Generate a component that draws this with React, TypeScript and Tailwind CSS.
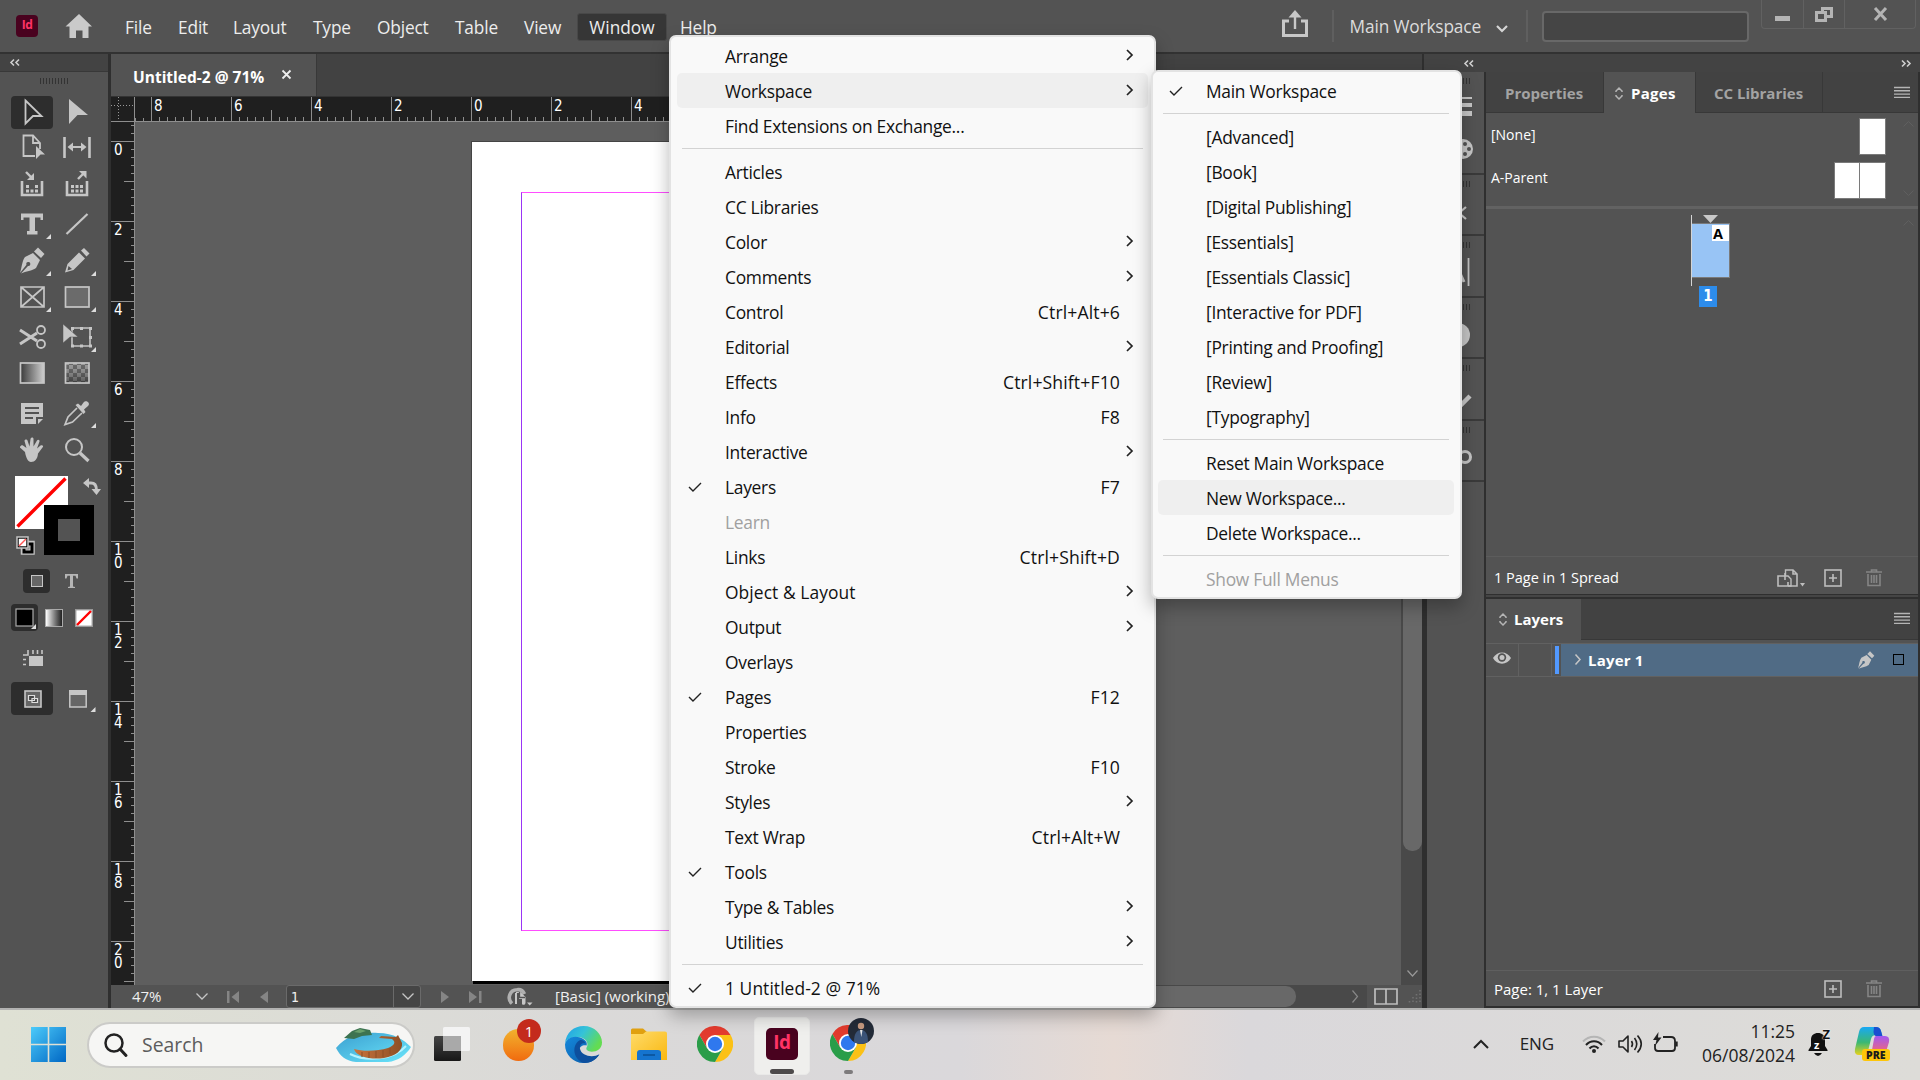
import type { ReactNode } from "react";

/* ---------- small shared glyphs ---------- */

type IconProps = { children: ReactNode; w?: number; h?: number; className?: string; box?: string };

function Icon({ children, w = 24, h = 24, className = "", box }: IconProps) {
  return (
    <svg width={w} height={h} viewBox={box ?? `0 0 ${w} ${h}`} fill="none" className={`block shrink-0 overflow-visible ${className}`}>
      {children}
    </svg>
  );
}

const Check = () => (
  <Icon w={14} h={10}>
    <path d="M1 5 L5 9 L13 1" stroke="#222" strokeWidth="1.4" />
  </Icon>
);

const ChevronRight = () => (
  <Icon w={7} h={12}>
    <path d="M1 1 L6 6 L1 11" stroke="#222" strokeWidth="1.7" />
  </Icon>
);

const Grip = () => (
  <div className="flex gap-0.5">
    {Array.from({ length: 10 }, (_, i) => (
      <i key={i} className="h-1.5 w-px bg-[#333]" />
    ))}
  </div>
);

const PanelMenu = () => (
  <Icon w={16} h={11}>
    <path d="M0 .5H16M0 3.8H16M0 7.1H16M0 10.4H16" stroke="#b5b5b5" strokeWidth="1.4" />
  </Icon>
);

const UpDown = () => (
  <Icon w={8} h={13}>
    <path d="M1 5V4L4 1L7 4V5M1 8V9L4 12L7 9V8" stroke="#b5b5b5" strokeWidth="1.5" />
  </Icon>
);

const AddIcon = () => (
  <Icon w={18} h={18}>
    <rect x="1" y="1" width="16" height="16" stroke="#bdbdbd" strokeWidth="1.6" />
    <path d="M9 5V13M5 9H13" stroke="#bdbdbd" strokeWidth="1.6" />
  </Icon>
);

const TrashIcon = () => (
  <Icon w={16} h={18}>
    <path d="M0 3H16M5.5 3V1H10.5V3M2 5V16.5H14V5M5.5 6V14M8 6V14M10.5 6V14" stroke="#858585" strokeWidth="1.6" />
  </Icon>
);

/* ---------- title bar ---------- */

const MENUS = [
  ["File", "w-[53px]"],
  ["Edit", "w-[55px]"],
  ["Layout", "w-[80px]"],
  ["Type", "w-[64px]"],
  ["Object", "w-[78px]"],
  ["Table", "w-[69px]"],
  ["View", "w-[53px]"],
];

function TitleBar() {
  return (
    <header className="flex h-[54px] shrink-0 items-center border-b-2 border-[#323232] bg-[#535353] text-[17.3px] tracking-[-0.15px] text-[#ededed]">
      <div className="ml-4 flex h-[22px] w-[22px] items-center justify-center rounded-[4px] bg-[#49021f] pb-0.5 text-[12px] font-bold tracking-[-0.5px] text-[#ff3366]">Id</div>
      <Icon w={28} h={24} className="-mt-px ml-[27px]">
        <path d="M14 0 L27 12.5 H23.5 V24 H17.5 V16.5 H11 V24 H4.5 V12.5 H0.5 Z" fill="#cacaca" />
      </Icon>
      <nav className="ml-8 mt-px flex items-center">
        {MENUS.map(([m, c]) => (
          <span key={m} className={`pt-[3px] ${c}`}>{m}</span>
        ))}
        <span className="flex h-7 w-[90px] items-center justify-center rounded-[3px] border border-[#484848] bg-[#363636] pt-[3px] tracking-normal">Window</span>
        <span className="ml-[13px] pt-[3px]">Help</span>
      </nav>
      <div className="ml-auto flex h-full items-center">
        <Icon w={26} h={28} className="-mt-1">
          <path d="M7 11H1.5V25.5H24.5V11H19" stroke="#c8c8c8" strokeWidth="3" />
          <path d="M13 19V4" stroke="#c8c8c8" strokeWidth="2.4" />
          <path d="M6.5 7.5L13 0L19.5 7.5Z" fill="#c8c8c8" />
        </Icon>
        <i className="ml-[24px] h-8 w-0.5 bg-[#5f5f5f]" />
        <span className="ml-[16px] pt-px text-[#dcdcdc]">Main Workspace</span>
        <Icon w={12} h={7} className="ml-[15px] mt-1">
          <path d="M1 1L6 6L11 1" stroke="#d5d5d5" strokeWidth="2.2" />
        </Icon>
        <i className="ml-[18px] h-8 w-0.5 bg-[#5f5f5f]" />
        <div className="ml-[14px] mt-px h-[31px] w-[207px] rounded-[4px] border-2 border-[#686868] bg-[#454545]" />
        <div className="ml-3 mr-[4px] flex h-[29px] w-[155px] self-start rounded-b-[4px] border border-t-0 border-[#616161]">
          <div className="flex w-[42px] border-r border-[#616161] pl-[13px] pt-4"><i className="h-[5px] w-[15px] bg-[#b4b4b4]" /></div>
          <div className="w-[41px] border-r border-[#616161] pl-[11px] pt-[7px]">
            <Icon w={18} h={15}>
              <rect x="7.5" y="1.5" width="9" height="8" stroke="#b4b4b4" strokeWidth="3" />
              <rect x="1.5" y="5.5" width="9" height="8" fill="#535353" stroke="#b4b4b4" strokeWidth="3" />
            </Icon>
          </div>
          <Icon w={15} h={12} className="ml-[28px] mt-2">
            <path d="M2 0L13 12M13 0L2 12" stroke="#b4b4b4" strokeWidth="3" />
          </Icon>
        </div>
      </div>
    </header>
  );
}

/* ---------- tool box ---------- */

const C = "#c6c6c6";

function Tool({ children, more, on }: { children?: ReactNode; more?: boolean; on?: boolean }) {
  return (
    <div className="flex w-[45px] items-center justify-center">
      <div className={`flex h-[33px] w-[42px] shrink-0 items-center justify-center rounded-[4px] ${on ? "bg-[#2d2d2d]" : ""}`}>
        <Icon w={32} h={32} box="-16 -16 32 32">
          {children}
          {more && <path d="M14 15H19V10Z" fill="#dcdcdc" />}
        </Icon>
      </div>
    </div>
  );
}

const Tray = () => <path d="M-10 -3V11H10V-3" stroke={C} strokeWidth="2.6" />;

const Dots = ({ rows }: { rows: number[][] }) => (
  <>
    {rows.map(([x, y]) => (
      <rect key={`${x},${y}`} x={x} y={y} width="3" height="3" fill={C} />
    ))}
  </>
);

const Pen = () => (
  <>
    <path d="M-12 12C-10 6 -10 0 -7 -4L1 -8L8 -1L4 7C0 10 -6 10 -11 12.5L-4 5A2 2 0 1 0 -5.5 3.8Z" fill={C} />
    <path d="M2 -9.5L6 -13.5L12.5 -7L9 -3Z" fill={C} />
  </>
);

function ToolBox() {
  return (
    <aside className="flex w-[111px] shrink-0 flex-col border-r-[3px] border-[#2f2f2f] bg-[#535353]">
      <div className="flex h-[18px] items-center border-b border-[#383838] bg-[#434343] pl-[10px]">
        <Icon w={10} h={7}>
          <path d="M4 .5L1 3.5L4 6.5M9 .5L6 3.5L9 6.5" stroke="#cfcfcf" strokeWidth="1.6" />
        </Icon>
      </div>
      <div className="flex justify-center pt-[6px]"><Grip /></div>
      <div className="mt-[11px] grid grid-cols-[45px_45px] grid-rows-[34px_36px_37px_43px_32px_39px_41px_32px_47px_28px] pl-[9px]">
        <Tool on><path d="M-6.500 -11.500L9.500 4H1L-6.500 11.500Z" stroke={C} strokeWidth="1.8" /></Tool>
        <Tool><path d="M-8 -13L11 3H0.5L-8 12Z" fill={C} /></Tool>
        <Tool>
          <path d="M3 9H-8.5V-11.5H1L8 -4V2M1 -11.5V-4H8" stroke={C} strokeWidth="1.8" />
          <path d="M4 -1L13 7.5H8.5L4 12Z" fill={C} />
        </Tool>
        <Tool>
          <path d="M-12.5 -10V11M12.5 -10V11" stroke={C} strokeWidth="2.6" />
          <path d="M-7 0H7" stroke={C} strokeWidth="2" />
          <path d="M-9.5 0L-4 -4.5V4.5ZM9.5 0L4 -4.5V4.5Z" fill={C} />
        </Tool>
        <Tool>
          <Tray />
          <path d="M-6 -12L-1 -7" stroke={C} strokeWidth="2.4" />
          <path d="M2 -11V-4H-5Z" fill={C} />
          <Dots rows={[[-6, 1], [3, 1], [-6, 5.5], [-1.5, 5.5], [3, 5.5]]} />
        </Tool>
        <Tool>
          <Tray />
          <path d="M1 -5L6 -10" stroke={C} strokeWidth="2.4" />
          <path d="M2 -13H9.5V-5.5Z" fill={C} />
          <Dots rows={[[-6, 1], [-1.5, 1], [3, 1], [-6, 5.5], [-1.5, 5.5], [3, 5.5]]} />
        </Tool>
        <Tool more>
          <path d="M-11 -10.5H11V-4H8.5V-6.5H3V7H5.5V10.5H-5V7H-2.5V-6.5H-8.5V-4H-11Z" fill={C} />
        </Tool>
        <Tool><path d="M-10.5 10L10.5 -10" stroke={C} strokeWidth="2.2" /></Tool>
        <Tool more><Pen /></Tool>
        <Tool more>
          <path d="M-12 11.5L-9.5 3L2 -8.5L8 -2.5L-3.5 9Z" fill={C} />
          <path d="M4 -10.5L7 -13L12.5 -7.5L9.5 -4.5Z" fill={C} />
          <path d="M-9.5 9.5L-8.5 5L-5 8Z" fill="#535353" />
        </Tool>
        <Tool more>
          <path d="M-11 -10H12V10H-11ZM-11 -10L12 10M12 -10L-11 10" stroke={C} strokeWidth="1.7" />
        </Tool>
        <Tool more><rect x="-11.5" y="-10" width="23.5" height="20" fill="#6b6b6b" stroke={C} strokeWidth="1.7" /></Tool>
        <Tool>
          <path d="M-12 -7L5 4M-12 7L5 -4" stroke={C} strokeWidth="3" />
          <circle cx="9" cy="-7" r="4" stroke={C} strokeWidth="1.8" />
          <circle cx="9" cy="7" r="4" stroke={C} strokeWidth="1.8" />
        </Tool>
        <Tool more>
          <path d="M-5 -9H13V9H-5Z" stroke={C} strokeWidth="1.6" />
          <path d="M-6 -10h3v3h-3zM3 -10h3v3h-3zM12 -10h3v3h-3zM12 -1h3v3h-3zM12 7.5h3v3h-3zM3 7.5h3v3h-3zM-6 7.5h3v3h-3z" fill={C} />
          <path d="M-14 -13L1 0H-7L-14 6Z" fill={C} stroke="#535353" strokeWidth=".5" />
        </Tool>
        <Tool>
          <defs>
            <linearGradient id="gradTool"><stop offset="0" stopColor="#3a3a3a" /><stop offset="1" stopColor="#cfcfcf" /></linearGradient>
          </defs>
          <rect x="-11.5" y="-10" width="23.5" height="20" fill="url(#gradTool)" stroke={C} strokeWidth="1.7" />
        </Tool>
        <Tool>
          <defs>
            <pattern id="featherChecks" width="8" height="8" patternUnits="userSpaceOnUse">
              <rect width="8" height="8" fill="#4c4c4c" /><rect width="4" height="4" fill="#969696" /><rect x="4" y="4" width="4" height="4" fill="#969696" />
            </pattern>
            <linearGradient id="featherFade" x2="0" y2="1"><stop offset="0" stopColor="#aaa" stopOpacity=".3" /><stop offset="1" stopColor="#333" stopOpacity=".65" /></linearGradient>
          </defs>
          <rect x="-11.5" y="-10" width="23.5" height="20" fill="url(#featherChecks)" />
          <rect x="-11.5" y="-10" width="23.5" height="20" fill="url(#featherFade)" stroke={C} strokeWidth="1.7" />
        </Tool>
        <Tool>
          <path d="M-11 -10H11V4H4V11H-11Z" fill={C} />
          <path d="M6 11L11 6H6Z" fill={C} />
          <path d="M-7 -5H7M-7 0H7M-7 5H1" stroke="#535353" strokeWidth="1.8" />
        </Tool>
        <Tool more>
          <path d="M0 -5L-9 4L-12 11.5L-4.5 9L5 0" stroke={C} strokeWidth="1.7" />
          <path d="M-1.5 -8L1 -9.5L4 -7L6.5 -10.5C9 -14 14 -10 11 -7L7 -3.5L8.5 -1L6.5 1Z" fill={C} />
        </Tool>
        <Tool>
          <path d="M-7 2L-11.5 -2C-13 -3 -10.5 -5.5 -9 -4.5L-5.5 -2L-7.5 -9C-7.5 -11 -5 -11 -4.5 -9.5L-2.5 -3.5L-1.5 -11C-1 -13 1.5 -13 1.5 -11L1.5 -3.5L5 -9.5C6 -11 8 -10 7.5 -8.5L5 -1.5L8.5 -4.5C10.5 -5.5 12 -4 10.5 -2.5L6 3.5C5.5 9 3 12 -1 12C-4 12 -6 8 -7 2Z" fill={C} />
        </Tool>
        <Tool>
          <circle cx="-3" cy="-3" r="8" stroke={C} strokeWidth="2" />
          <path d="M3 3L11.5 11" stroke={C} strokeWidth="3.2" />
        </Tool>
      </div>

      {/* fill and stroke proxies */}
      <div className="relative mt-[11px] h-[82px]">
        <Icon w={53} h={53} className="absolute left-[15px] top-px">
          <rect width="53" height="53" fill="#fff" />
          <path d="M2.5 50.5L50.5 2.5" stroke="#f00" strokeWidth="3.4" />
        </Icon>
        <div className="absolute left-[44px] top-[30px] h-[50px] w-[50px] border-[14px] border-black bg-[#535353]" />
        <Icon w={18} h={18} className="absolute left-[83px] top-[3px]">
          <path d="M4 5H8C12 5 13.5 8 13.5 12" stroke={C} strokeWidth="2.8" />
          <path d="M0 5L6 0V10ZM8.5 11H18L13.5 17Z" fill={C} />
        </Icon>
        <Icon w={18} h={18} className="absolute left-[16px] top-[61px]">
          <rect x="7.5" y="7.5" width="8.5" height="8.5" fill="#535353" stroke="#c6c6c6" strokeWidth="5.5" />
          <rect x="8" y="8" width="8" height="8" stroke="#000" strokeWidth="3" />
          <rect x="1" y="1" width="11" height="11" fill="#fff" stroke="#c6c6c6" strokeWidth="1.5" />
          <rect x="2.2" y="2.2" width="8.6" height="8.6" fill="#fff" stroke="#000" strokeWidth="1" />
          <path d="M3 10L10 3" stroke="#f55" strokeWidth="1.5" />
        </Icon>
      </div>

      <div className="mt-[12px] flex h-6 items-center pl-[23px]">
        <div className="flex h-6 w-[27px] items-center justify-center rounded-[4px] bg-[#2d2d2d]">
          <i className="h-3 w-3 border border-[#c6c6c6] bg-[#666]" />
        </div>
        <Icon w={13} h={14} className="ml-[15px]">
          <path d="M0 0H13V4.5H11.5L10.5 1.8H8V12.5L10 13V14H3V13L5 12.5V1.8H2.5L1.5 4.5H0Z" fill="#b5b5b5" />
        </Icon>
      </div>

      <div className="mt-[11px] flex h-[27px] items-center pl-[11px]">
        <div className="flex h-[27px] w-[27px] items-center justify-center rounded-[4px] bg-[#2d2d2d]">
          <Icon w={20} h={20}>
            <rect x="1" y="1" width="17" height="17" fill="#000" stroke="#aaa" strokeWidth="1.2" />
            <path d="M16 21H21V16Z" fill="#ddd" />
          </Icon>
        </div>
        <div className="ml-[7px] h-[18px] w-[18px] border border-[#aaa] bg-linear-to-r from-white to-[#222]" />
        <Icon w={18} h={18} className="ml-[12px]">
          <rect x=".7" y=".7" width="16.6" height="16.6" fill="#fff" stroke="#999" strokeWidth="1.4" />
          <path d="M2 16L16 2" stroke="#f00" strokeWidth="2.4" />
        </Icon>
      </div>

      <Icon w={20} h={17} className="ml-[23px] mt-[19px]">
        <rect x="6" y="6" width="14" height="10" fill={C} />
        <path d="M5 0V5H0M10 0V4M14.5 0V4M19 0V4M0 9.5H3M0 14.5H3" stroke={C} strokeWidth="1.6" />
      </Icon>

      <div className="mt-[15px] flex h-[33px] items-center pl-[11px]">
        <div className="flex h-[33px] w-[42px] items-center justify-center rounded-[4px] bg-[#2d2d2d]">
          <Icon w={18} h={18} className="ml-0.5">
            <rect x="1" y="1" width="16" height="16" fill="#666" stroke="#c6c6c6" strokeWidth="1.6" />
            <path d="M4.5 5.5H10.5V10.5H4.5ZM8 8.5H13.5V12.5H8Z" fill="#444" stroke="#ddd" strokeWidth="1.2" />
          </Icon>
        </div>
        <Icon w={18} h={18} className="ml-4">
          <rect x=".8" y="1" width="16.4" height="16" fill="#666" stroke="#c6c6c6" strokeWidth="1.5" />
          <rect y="0" width="18" height="5" fill="#c6c6c6" />
          <path d="M21.5 22H26.5V17Z" fill="#ddd" />
        </Icon>
      </div>
    </aside>
  );
}

/* ---------- document window ---------- */

function TopRuler() {
  return (
    <div className="flex h-[25px] shrink-0 border-b border-[#8e8e8e] bg-[#1f1f1f] font-['DejaVu_Sans_Condensed','Open_Sans',sans-serif] text-[15px] leading-none text-white">
      <Icon w={24} h={24}>
        <path d="M7.5 0V24M0 8.5H24" stroke="#999" strokeDasharray="1 2" />
        <path d="M23.5 0V24" stroke="#8e8e8e" />
      </Icon>
      <div className="flex flex-1 overflow-hidden">
        <div className="w-4 shrink-0">
          <Icon w={16} h={24}><path d="M.5 21V24M8.5 21V24" stroke="#8e8e8e" /></Icon>
        </div>
        {["8", "6", "4", "2", "0", "2", "4"].map((n, i) => (
          <div key={i} className="flex w-20 shrink-0">
            <Icon w={80} h={24}>
              <path d="M.5 0V24M40.5 13V24" stroke="#8e8e8e" />
              <path d="M8.5 20V24M16.5 20V24M24.5 20V24M32.5 20V24M48.5 20V24M56.5 20V24M64.5 20V24M72.5 20V24" stroke="#8e8e8e" />
            </Icon>
            <span className="-ml-[77px] pt-[2px]">{n}</span>
          </div>
        ))}
      </div>
    </div>
  );
}

function SideRuler() {
  return (
    <div className="flex w-6 shrink-0 flex-col overflow-hidden border-r border-[#8e8e8e] bg-[#1f1f1f] font-['DejaVu_Sans_Condensed','Open_Sans',sans-serif] text-[15px] leading-[13px] text-white">
      <div className="h-[19px] shrink-0">
        <Icon w={23} h={19}><path d="M20 3.5H23M20 11.5H23" stroke="#8e8e8e" /></Icon>
      </div>
      {["0", "2", "4", "6", "8", "10", "12", "14", "16", "18", "20"].map((n) => (
        <div key={n} className="flex h-20 shrink-0">
          <Icon w={23} h={80}>
            <path d="M0 .5H23M13 40.5H23" stroke="#8e8e8e" />
            <path d="M20 8.5H23M20 16.5H23M20 24.5H23M20 32.5H23M20 48.5H23M20 56.5H23M20 64.5H23M20 72.5H23" stroke="#8e8e8e" />
          </Icon>
          <span className="-ml-[20px] flex flex-col pt-[3px]">
            {n.split("").map((d, i) => (
              <span key={i}>{d}</span>
            ))}
          </span>
        </div>
      ))}
    </div>
  );
}

const NAV = "#858585";

function StatusBar() {
  return (
    <div className="flex h-[23px] shrink-0 items-center bg-[#535353] text-[15px] tracking-[-0.1px] text-[#f0f0f0]">
      <span className="ml-[21px] w-[64px]">47%</span>
      <Icon w={12} h={7}><path d="M.5 .5L6 6L11.5 .5" stroke="#c6c6c6" strokeWidth="1.3" /></Icon>
      <Icon w={12} h={12} className="ml-[19px]"><path d="M0 0H2.5V12H0ZM12 0V12L4.5 6Z" fill={NAV} /></Icon>
      <Icon w={8} h={12} className="ml-[21px]"><path d="M8 0V12L0 6Z" fill={NAV} /></Icon>
      <div className="ml-[18px] flex h-[23px] w-[135px] items-center rounded-[3px] border border-[#6a6a6a] bg-[#454545]">
        <span className="w-[107px] self-stretch border-r border-[#6a6a6a] pl-1 font-['DejaVu_Sans_Condensed','Open_Sans',sans-serif] text-[14px] leading-[22px]">1</span>
        <Icon w={12} h={7} className="ml-2"><path d="M.5 .5L6 6L11.5 .5" stroke="#c6c6c6" strokeWidth="1.3" /></Icon>
      </div>
      <Icon w={8} h={12} className="ml-[20px]"><path d="M0 0V12L8 6Z" fill={NAV} /></Icon>
      <Icon w={13} h={12} className="ml-[20px]"><path d="M0 0V12L8 6ZM10 0H12.5V12H10Z" fill={NAV} /></Icon>
      <Icon w={26} h={18} className="ml-[25px]">
        <path d="M5 15.5A7.8 7.8 0 0 1 10 1.8C13 1.2 16 3 17.5 6" stroke="#b0b0b0" strokeWidth="3.6" />
        <path d="M9 4H13.5L18.500 9V15C18 17 16 17.500 15 16V11H12V5H9Z" fill="#c6c6c6" />
        <path d="M12.500 4V9.5H18" stroke="#535353" strokeWidth="1.3" />
        <path d="M9 5V16" stroke="#c6c6c6" strokeWidth="2" />
        <path d="M20 14.5H25.5L22.7 17.5Z" fill="#c6c6c6" />
      </Icon>
      <span className="ml-[22px] w-[129px] whitespace-nowrap tracking-normal">[Basic] (working)</span>
      <div className="flex h-full flex-1 items-center justify-between bg-[#494949]">
        <div className="ml-[300px] h-[21px] w-[312px] rounded-r-[10px] bg-[#686868]" />
        <Icon w={6} h={13} className="mr-[9px]"><path d="M.5 .5L5.5 6.5L.5 12.5" stroke="#888" strokeWidth="1.2" /></Icon>
      </div>
      <Icon w={24} h={17} className="ml-[7px]">
        <path d="M1 1H23V16H1ZM12 1V16" stroke="#bdbdbd" strokeWidth="1.7" />
      </Icon>
      <Icon w={16} h={15} className="ml-[8px]">
        <path d="M14 1V15M10.5 5V15M7 8V15M3.5 12V15" stroke="#707070" strokeWidth="1.6" strokeDasharray="1.5 2" />
      </Icon>
    </div>
  );
}

function DocumentWindow() {
  return (
    <main className="flex w-[1311px] shrink-0 flex-col bg-[#5e5e5e]">
      <div className="flex h-[43px] shrink-0 border-b border-[#333] bg-[#424242]">
        <div className="flex w-[206px] items-center border-r border-[#383838] bg-[#535353] pl-[22px] pt-[5px] text-[15.5px] font-bold text-white">
          <span className="w-[150px] whitespace-nowrap">Untitled-2 @ 71%</span>
          <Icon w={9} h={9} className="-mt-[6px] -ml-px"><path d="M.5 .5L8.5 8.5M8.5 .5L.5 8.5" stroke="#eee" strokeWidth="1.8" /></Icon>
        </div>
      </div>
      <TopRuler />
      <div className="flex min-h-0 flex-1">
        <SideRuler />
        <div className="flex-1 overflow-hidden pl-[336px] pt-[19px]">
          <div className="h-[840px] w-[640px] border-l border-t border-[#444] bg-white pl-[49px] pt-[50px] shadow-[2px_3px_0_#000]">
            <div className="h-[739px] w-[540px] border border-[#ff4dff] border-l-[#9a35f5]" />
          </div>
        </div>
        <div className="flex w-[21px] flex-col items-end bg-[#494949]">
          <div className="h-[729px] w-[19px] rounded-b-[9px] bg-[#686868]" />
          <Icon w={11} h={7} className="mb-[8px] mr-1 mt-auto"><path d="M.5 .5L5.5 6L10.5 .5" stroke="#999" strokeWidth="1.2" /></Icon>
        </div>
      </div>
      <StatusBar />
    </main>
  );
}

/* ---------- collapsed panel dock ---------- */

const DOCK: [string, ReactNode][] = [
  ["h-[103px]", (
    <>
      <path d="M-14 -26H8" stroke={C} strokeWidth="2" />
      <path d="M-14 -19H8" stroke={C} strokeWidth="4" />
      <path d="M-14 -10.5H8" stroke={C} strokeWidth="5" />
      <circle cx="-1" cy="25" r="10" fill={C} />
      <circle cx="1" cy="20" r="2" fill="#535353" /><circle cx="5" cy="25" r="2" fill="#535353" /><circle cx="1" cy="30" r="2" fill="#535353" />
    </>
  )],
  ["h-[61px]", <path d="M2 1L-5 7L2 13" stroke={C} strokeWidth="2.2" />],
  ["h-[62px]", <><path d="M-16 15L-9 -5L0 15" stroke={C} strokeWidth="3" /><path d="M4.5 -9V19" stroke={C} strokeWidth="1.8" /></>],
  ["h-[61px]", <circle cx="-6" cy="6" r="12" fill={C} />],
  ["h-[62px]", <path d="M-6 11L-2 14L6 6" stroke={C} strokeWidth="4.5" />],
  ["h-[61px]", <circle cx="1" cy="5" r="5.5" stroke={C} strokeWidth="3" />],
];

function Dock() {
  return (
    <div className="flex w-[62px] shrink-0 flex-col border-l-[3px] border-r-2 border-[#2f2f2f] bg-[#535353]">
      {DOCK.map(([h, icon], i) => (
        <div key={i} className={`flex flex-col items-center border-b-2 border-[#3a3a3a] pt-1.5 ${h}`}>
          <Grip />
          <div className="flex flex-1 items-center pb-[10px] pl-4"><Icon w={2} h={2} box="-1 -1 2 2">{icon}</Icon></div>
        </div>
      ))}
    </div>
  );
}

/* ---------- right-hand panels ---------- */

const ScrollHint = ({ up, className = "" }: { up?: boolean; className?: string }) => (
  <Icon w={11} h={6} className={className}>
    <path d={up ? "M.5 5.5L5.5 .5L10.5 5.5" : "M.5 .5L5.5 5.5L10.5 .5"} stroke="#5f5f5f" />
  </Icon>
);

function PagesPanel() {
  return (
    <section className="flex h-[523px] shrink-0 flex-col border-b border-[#2f2f2f] bg-[#535353]">
      <div className="flex h-[41px] shrink-0 items-stretch bg-[#424242] text-[15px] font-bold text-[#a3a3a3]">
        <div className="flex w-[118px] items-center border-b border-r border-[#383838] pl-[19px] pt-[3px]">Properties</div>
        <div className="flex w-[91px] items-center bg-[#535353] pl-[11px] pt-0.5 text-white"><UpDown /><span className="ml-[8px] tracking-[0.3px]">Pages</span></div>
        <div className="flex w-[128px] items-center border-b border-l border-r border-[#383838] pl-[18px] pt-[3px]">CC Libraries</div>
        <div className="flex flex-1 items-center justify-end border-b border-[#383838] pr-2"><PanelMenu /></div>
      </div>
      <div className="flex h-[96px] shrink-0 border-b-[3px] border-[#626262] text-[14px] text-white">
        <div className="flex flex-1 flex-col pl-[5px]">
          <div className="flex h-[43px] items-center">[None]</div>
          <div className="flex h-[43px] items-center">A-Parent</div>
        </div>
        <div className="flex flex-col items-end pt-[5px]">
          <div className="h-[37px] w-[27px] border border-[#7a7a7a] bg-white" />
          <div className="mt-[7px] flex h-[37px] w-[52px] border border-[#7a7a7a] bg-white"><i className="w-[25px] border-r border-[#7a7a7a]" /></div>
        </div>
        <div className="flex flex-col justify-between pb-[10px] pl-[17px] pr-[4px] pt-2"><ScrollHint up /><ScrollHint /></div>
      </div>
      <div className="flex flex-1 justify-between border-b border-[#5c5c5c]">
        <div className="ml-[205px] mt-[6px] flex h-[71px] w-[39px] flex-col border-l border-[#d5d5d5]">
          <Icon w={15} h={8} className="ml-[11px]"><path d="M0 0H15L7.5 8Z" fill="#c8c8c8" /></Icon>
          <div className="flex h-[55px] shrink-0 justify-end border border-l-0 border-[#7a7a7a] bg-[#98c4f5]">
            <span className="mt-px h-4 w-[17px] bg-white pl-px text-[14.5px] font-bold leading-[17px] text-black">A</span>
          </div>
          <span className="ml-[7px] mt-[8px] flex h-[21px] w-[18px] shrink-0 items-center justify-center bg-[#2d8ceb] font-['DejaVu_Sans_Condensed','Open_Sans',sans-serif] text-[15px] font-bold text-white">1</span>
        </div>
        <ScrollHint up className="mr-[4px] mt-[11px]" />
      </div>
      <div className="flex h-[37px] shrink-0 items-center pl-2 pt-1 text-[14.5px] text-white">
        <span className="w-[283px] pt-px">1 Page in 1 Spread</span>
        <Icon w={28} h={18}>
          <path d="M8 7H1V17H11M11 1H16L20 5V17H11V13M16 1V5H20M8 4V11" stroke="#bdbdbd" strokeWidth="1.6" />
          <path d="M11 1H8.5V7H11L14 10V17H11" stroke="#bdbdbd" strokeWidth="1.4" />
          <path d="M23 14H28L25.5 17.5Z" fill="#bdbdbd" />
        </Icon>
        <div className="ml-[19px]"><AddIcon /></div>
        <div className="ml-[24px]"><TrashIcon /></div>
      </div>
    </section>
  );
}

function LayersPanel() {
  return (
    <section className="mt-[2px] flex min-h-0 flex-1 flex-col border-b-2 border-t-2 border-[#2f2f2f] bg-[#535353]">
      <div className="flex h-[41px] shrink-0 bg-[#424242]">
        <div className="flex w-[95px] items-center bg-[#535353] pl-[13px] text-[15px] font-bold text-white"><UpDown /><span className="ml-[7px]">Layers</span></div>
        <div className="flex flex-1 items-center justify-end border-b border-[#383838] pb-0.5 pr-2"><PanelMenu /></div>
      </div>
      <div className="mt-[3px] flex h-[34px] shrink-0 border-y border-[#616161]">
        <div className="flex w-[33px] items-center justify-center border-r border-[#616161]">
          <Icon w={18} h={12} className="-mt-1">
            <path d="M0 6C4 -1.5 14 -1.5 18 6C14 13.5 4 13.5 0 6Z" fill={C} />
            <circle cx="9" cy="5.5" r="4.2" fill="#535353" /><circle cx="9" cy="5.5" r="2.5" fill={C} />
          </Icon>
        </div>
        <div className="w-[33px] border-r border-[#616161]" />
        <div className="flex w-[9px] justify-center py-[2px]"><i className="w-1 bg-[#5299ff]" /></div>
        <div className="flex flex-1 items-center bg-[#506b85] pl-[14px] text-[15px] font-bold text-white">
          <Icon w={6} h={11} className="-mt-0.5"><path d="M.5 .5L5 5.5L.5 10.5" stroke="#c6c6c6" strokeWidth="1.5" /></Icon>
          <span className="ml-[7px] tracking-[0.2px]">Layer 1</span>
          <Icon w={18} h={18} box="-13 -14 26 27" className="ml-auto"><Pen /></Icon>
          <i className="-mt-px ml-[18px] mr-[14px] h-[11px] w-[11px] border border-black" />
        </div>
      </div>
      <div className="flex-1 border-b border-[#5f5f5f]" />
      <div className="flex h-[35px] shrink-0 items-center pl-2 text-[15px] text-white">
        <span className="w-[330px] pt-px">Page: 1, 1 Layer</span>
        <AddIcon />
        <div className="ml-[24px]"><TrashIcon /></div>
      </div>
    </section>
  );
}

function RightSide() {
  return (
    <aside className="flex min-w-0 flex-1 flex-col border-l-2 border-[#2f2f2f]">
      <div className="flex h-[18px] shrink-0 items-center justify-between bg-[#434343] pl-[40px] pr-[9px]">
        <Icon w={10} h={7}><path d="M4 .5L1 3.5L4 6.5M9 .5L6 3.5L9 6.5" stroke="#cfcfcf" strokeWidth="1.6" /></Icon>
        <Icon w={10} h={7}><path d="M1 .5L4 3.5L1 6.5M6 .5L9 3.5L6 6.5" stroke="#cfcfcf" strokeWidth="1.6" /></Icon>
      </div>
      <div className="flex min-h-0 flex-1">
        <Dock />
        <div className="flex min-w-0 flex-1 flex-col border-r-2 border-[#2f2f2f] bg-[#454545]">
          <PagesPanel />
          <LayersPanel />
        </div>
      </div>
    </aside>
  );
}

/* ---------- menus ---------- */

type Entry = { label: string; keys?: string; sub?: boolean; checked?: boolean; off?: boolean; hot?: boolean; wide?: boolean } | null;

const WINDOW_MENU: Entry[] = [
  { label: "Arrange", sub: true },
  { label: "Workspace", sub: true, hot: true },
  { label: "Find Extensions on Exchange..." },
  null,
  { label: "Articles" },
  { label: "CC Libraries" },
  { label: "Color", sub: true },
  { label: "Comments", sub: true },
  { label: "Control", keys: "Ctrl+Alt+6" },
  { label: "Editorial", sub: true },
  { label: "Effects", keys: "Ctrl+Shift+F10" },
  { label: "Info", keys: "F8" },
  { label: "Interactive", sub: true },
  { label: "Layers", keys: "F7", checked: true },
  { label: "Learn", off: true },
  { label: "Links", keys: "Ctrl+Shift+D" },
  { label: "Object & Layout", sub: true, wide: true },
  { label: "Output", sub: true },
  { label: "Overlays" },
  { label: "Pages", keys: "F12", checked: true },
  { label: "Properties" },
  { label: "Stroke", keys: "F10" },
  { label: "Styles", sub: true },
  { label: "Text Wrap", keys: "Ctrl+Alt+W" },
  { label: "Tools", checked: true },
  { label: "Type & Tables", sub: true },
  { label: "Utilities", sub: true },
  null,
  { label: "1 Untitled-2 @ 71%", checked: true, wide: true },
];

const WORKSPACE_MENU: Entry[] = [
  { label: "Main Workspace", checked: true },
  null,
  { label: "[Advanced]" },
  { label: "[Book]" },
  { label: "[Digital Publishing]" },
  { label: "[Essentials]" },
  { label: "[Essentials Classic]" },
  { label: "[Interactive for PDF]" },
  { label: "[Printing and Proofing]" },
  { label: "[Review]" },
  { label: "[Typography]" },
  null,
  { label: "Reset Main Workspace" },
  { label: "New Workspace...", hot: true },
  { label: "Delete Workspace..." },
  null,
  { label: "Show Full Menus", off: true },
];

function Menu({ entries, className }: { entries: Entry[]; className: string }) {
  return (
    <div className={`absolute rounded-[7px] border-2 border-[#e3e3e3] bg-[#f9f9f9] py-px pr-1.5 shadow-[0_8px_18px_rgba(0,0,0,0.28)] ${className}`}>
      {entries.map((e, i) =>
        e === null ? (
          <div key={i} className="mx-[5px] h-[11px] pt-[5px]"><div className="h-px bg-[#d3d3d3]" /></div>
        ) : (
          <div
            key={i}
            className={`flex h-[35px] items-center whitespace-nowrap rounded-[5px] text-[17.4px] ${e.wide ? "tracking-[0.08px]" : "tracking-[-0.28px]"} ${e.off ? "text-[#a0a0a0]" : "text-[#111]"} ${e.hot ? "bg-[#efefef]" : ""}`}
          >
            <span className="flex w-12 shrink-0 justify-start pl-[11px]">{e.checked && <Check />}</span>
            <span className="flex-1 pt-0.5">{e.label}</span>
            {e.keys && <span className="mr-[28px] pt-0.5 text-[17.6px] tracking-[0.12px]">{e.keys}</span>}
            {e.sub && <span className="mr-[15px] pb-0.5"><ChevronRight /></span>}
          </div>
        ),
      )}
    </div>
  );
}

/* ---------- taskbar ---------- */

const ChromeLogo = () => (
  <svg width="36" height="36" viewBox="-18 -18 36 36" className="block shrink-0">
    <path d="M-15.6 -9A18 18 0 0 1 15.6 -9L0 -9L-7.8 4.5Z" fill="#e33b2e" />
    <path d="M15.6 -9A18 18 0 0 1 0 18L7.8 4.5L0 -9Z" fill="#fbc116" />
    <path d="M0 18A18 18 0 0 1 -15.6 -9L-7.8 4.5L7.8 4.5Z" fill="#2a9d49" />
    <circle r="9" fill="#fff" />
    <circle r="7.2" fill="#2f78ee" />
  </svg>
);

function Taskbar() {
  return (
    <footer className="flex h-[72px] shrink-0 items-center border-t-2 border-[#b2b2b1] bg-[linear-gradient(90deg,#dfe1d4_0%,#dad9d8_30%,#dad8db_50%,#e6dad4_58%,#dad8db_65%,#dddcd8_100%)] pl-[31px] text-[#222]">
      <Icon w={35} h={35} className="-mt-0.5">
        <defs><linearGradient id="winLogo" x2="1" y2="1"><stop offset="0" stopColor="#4ccbfa" /><stop offset="1" stopColor="#0067c4" /></linearGradient></defs>
        <path d="M0 0H16.7V16.7H0ZM18.3 0H35V16.7H18.3ZM0 18.3H16.7V35H0ZM18.3 18.3H35V35H18.3Z" fill="url(#winLogo)" />
      </Icon>
      <div className="-mt-px ml-[21px] flex h-[46px] w-[328px] items-center rounded-full border-2 border-[#cbcbc8] bg-[#f6f6f4] pl-[15px]">
        <Icon w={24} h={24}>
          <circle cx="10" cy="10" r="8.5" stroke="#222" strokeWidth="2.5" />
          <path d="M16 16L22 22.5" stroke="#222" strokeWidth="3" strokeLinecap="round" />
        </Icon>
        <span className="ml-[14px] text-[19.4px] text-[#5c5c5c]">Search</span>
        <svg width="75" height="34" viewBox="0 0 75 34" className="ml-auto mr-0.5 shrink-0 overflow-visible">
          <defs>
            <linearGradient id="sea" x2="1" y2="1"><stop offset="0" stopColor="#3b9fd0" /><stop offset="1" stopColor="#6be6fb" /></linearGradient>
            <linearGradient id="boat" x2="1"><stop offset="0" stopColor="#c9743c" /><stop offset="1" stopColor="#8d4f26" /></linearGradient>
          </defs>
          <path d="M0 20C10 8 24 4 42 5C58 5 68 12 75 19C70 27 62 33 52 34H20C10 33 4 28 0 20Z" fill="url(#sea)" />
          <path d="M14 26C30 34 58 32 70 18" stroke="#b4f3ff" strokeWidth="2" fill="none" />
          <path d="M8 10L16 3L24 0L34 2L36 7L26 8L18 11Z" fill="#3d7350" />
          <path d="M18 4L24 1L30 3L24 5Z" fill="#69a06c" />
          <path d="M18 21C28 24 42 23 52 20C59 17 60 14 56 11L43 10L45 8L60 9L62 7L66 15C67 22 60 28 48 30C36 32 20 29 18 21Z" fill="url(#boat)" />
          <path d="M26 24V29M33 24V30M40 23V30M47 22V29M54 20V26" stroke="#8d4f26" strokeWidth="1" />
        </svg>
      </div>
      <Icon w={36} h={35} className="-mt-0.5 ml-[19px]">
        <defs>
          <linearGradient id="taskView" x2="0" y2="1"><stop offset="0" stopColor="#454545" /><stop offset="1" stopColor="#171717" /></linearGradient>
        </defs>
        <rect y="9" width="27" height="25" rx="1.5" fill="url(#taskView)" />
        <rect x="9" y="0" width="27" height="24" rx="1.5" fill="#f3f3f3" />
        <path d="M9 9H27V24H9Z" fill="#a9a9a9" />
      </Icon>
      <div className="relative ml-[33px] h-[32px] w-[32px]">
        <div className="h-[32px] w-[31px] rounded-full bg-linear-to-b from-[#f0b22d] to-[#f06a0e]" />
        <span className="absolute -top-[10px] left-[14px] flex h-6 w-6 items-center justify-center rounded-full bg-[#c42b1c] text-[15px] text-white">1</span>
      </div>
      <svg width="37" height="37" viewBox="0 0 36 36" className="-mt-0.5 ml-[30px] shrink-0">
        <defs>
          <linearGradient id="edgeTop" x2="1" y2=".5"><stop offset="0" stopColor="#1f9ee8" /><stop offset=".5" stopColor="#35c3d8" /><stop offset="1" stopColor="#63dc52" /></linearGradient>
          <linearGradient id="edgeLow" x2="1" y2="1"><stop offset="0" stopColor="#1488dc" /><stop offset="1" stopColor="#0c59a4" /></linearGradient>
        </defs>
        <path d="M0 17C1 6 9 0 18 0C29 0 36 8 36 16C36 22 31 25 26 25C22 25 20 23 21 21C23 18 22 13 15 11C8 10 2 12 0 17Z" fill="url(#edgeTop)" />
        <path d="M0 18C1 12 8 9 14 11C20 13 22 16 21 19C15 17 9 26 18 31C23 33.5 29 31 33 28C30 33 25 36 18 36C8 36 0 28 0 18Z" fill="url(#edgeLow)" />
        <path d="M14 14C6 19 8 33 19 36C26 36 31 32 33.5 27.5C28 31 16 30 14.5 22C14 18 17 16 20 17C19 15 17 13 14 14Z" fill="#0d4f9e" />
      </svg>
      <Icon w={36} h={35} className="ml-[29px]">
        <defs><linearGradient id="folder" x2="1" y2="1"><stop offset="0" stopColor="#ffdb6a" /><stop offset="1" stopColor="#f9b810" /></linearGradient></defs>
        <path d="M0 2Q0 .5 1.5 .5H12L16 4H30V10H0Z" fill="#e0a010" />
        <path d="M0 6H12L15 3.5H34Q36 3.5 36 5.5V32H0Z" fill="url(#folder)" />
        <path d="M6 32V25Q6 22 9 22H27Q30 22 30 25V32Z" fill="#1574cf" />
        <path d="M12 27H24" stroke="#0a4f95" strokeWidth="1.5" />
      </Icon>
      <div className="-mt-0.5 ml-[30px]"><ChromeLogo /></div>
      <div className="ml-[21px] mt-px flex h-[58px] w-[56px] flex-col items-center justify-between rounded-[5px] border border-[#e9e9e8] bg-[#efefed] pt-[10px]">
        <div className="flex h-8 w-8 items-center justify-center rounded-[5px] bg-[#49021f] pb-0.5 text-[19px] font-bold tracking-[-0.5px] text-[#ff3366]">Id</div>
        <i className="h-[5px] w-6 rounded-full bg-[#4d4a4b]" />
      </div>
      <div className="relative ml-[20px] flex h-[58px] w-[44px] flex-col justify-between pt-[9px]">
        <ChromeLogo />
        <i className="ml-[14px] h-1 w-[9px] rounded-full bg-[#7d7b7c]" />
        <svg width="26" height="26" viewBox="0 0 26 26" className="absolute left-[18px] top-[2px]">
          <circle cx="13" cy="13" r="13" fill="#232b38" />
          <circle cx="13" cy="8" r="3.2" fill="#c69a80" />
          <path d="M6 24C6 15 9 12 13 12C17 12 20 15 20 24Q13 28 6 24Z" fill="#3b5377" />
          <path d="M12 12H14.5L13.3 19Z" fill="#e6e6e6" />
        </svg>
      </div>

      <div className="-mt-0.5 ml-auto flex h-full items-center">
        <Icon w={16} h={9}><path d="M1 8L8 1L15 8" stroke="#222" strokeWidth="2" /></Icon>
        <span className="ml-[31px] text-[17px] tracking-[-0.1px]">ENG</span>
        <Icon w={24} h={18} className="ml-[28px]">
          <path d="M1 6.5C7 0 17 0 23 6.5" stroke="#b5b5b5" strokeWidth="2" />
          <path d="M4 10C8.5 5 15.5 5 20 10M7.5 13.5C10 10.5 14 10.5 16.5 13.5" stroke="#222" strokeWidth="2" />
          <circle cx="12" cy="16" r="2" fill="#222" />
        </Icon>
        <Icon w={25} h={20} className="ml-[12px]">
          <path d="M1 7H5L10 2V18L5 13H1Z" stroke="#222" strokeWidth="1.6" strokeLinejoin="round" />
          <path d="M13.5 7Q15.5 10 13.5 13M16.5 4Q21 10 16.5 16M19.5 1.5Q27 10 19.5 18.5" stroke="#222" strokeWidth="1.6" />
        </Icon>
        <Icon w={26} h={20} className="ml-[10px]">
          <path d="M10 3H18Q22 3 22 7V14Q22 17 19 17H5Q2 17 2 14V10" stroke="#222" strokeWidth="1.8" />
          <path d="M23.5 7.5V12.5" stroke="#222" strokeWidth="2.4" />
          <path d="M5.5 -2L0 6H3.5L2 12L8.5 3.5H5Z" fill="#222" />
        </Icon>
        <div className="ml-[21px] flex w-[95px] flex-col items-end pb-0.5 text-[17.5px] leading-[24px]">
          <span>11:25</span>
          <span>06/08/2024</span>
        </div>
        <div className="relative ml-[13px]">
          <Icon w={20} h={24}>
            <path d="M3 14V8C3 3 6 1 10 1S17 3 17 8V14L19.5 18V19H.5V18Z" fill="#111" />
            <path d="M6 21H14Q12 24 10 24Q8 24 6 21Z" fill="#111" />
          </Icon>
          <span className="absolute -right-0.5 -top-[4px] text-[13px] font-bold leading-none text-[#111] [text-shadow:0_0_2px_#fff,0_0_1px_#fff]">Z</span>
          <span className="absolute left-[6px] top-[7px] text-[11px] font-bold leading-none text-white">z</span>
        </div>
        <div className="relative ml-[26px] mr-[30px]">
          <svg width="36" height="34" viewBox="0 0 36 34" className="block overflow-visible">
            <defs>
              <linearGradient id="copA" x2="0" y2="1"><stop offset="0" stopColor="#18a8f5" /><stop offset=".55" stopColor="#3bb873" /><stop offset="1" stopColor="#e8d21c" /></linearGradient>
              <linearGradient id="copB" x2="0" y2="1"><stop offset="0" stopColor="#a259f2" /><stop offset="1" stopColor="#ff6a63" /></linearGradient>
            </defs>
            <path d="M10 0H22Q26 0 27 4L28 8H22Q18 8 17 12L14 24Q13 28 9 28H5Q0 28 1 22L5 5Q6 0 10 0Z" fill="url(#copA)" />
            <path d="M20 0H22Q26 0 27 4L28.5 9H22Q20 9 19.5 5Z" fill="#1a4fd0" />
            <path d="M22 9H31Q36 9 35 15L31 28H14Q17 27 18 23L20 12Q20.5 9 22 9Z" fill="url(#copB)" />
          </svg>
          <span className="absolute bottom-0 left-2 flex h-[12px] items-center rounded-[3px] bg-[#fdc60a] px-1 text-[10.5px] font-extrabold leading-none text-[#1b1b1b]">PRE</span>
        </div>
      </div>
    </footer>
  );
}

export default function App() {
  return (
    <div className="relative flex h-[1080px] w-[1920px] flex-col overflow-hidden bg-[#535353] font-['Open_Sans','Noto_Sans',sans-serif]">
      <TitleBar />
      <div className="flex min-h-0 flex-1">
        <ToolBox />
        <DocumentWindow />
        <RightSide />
      </div>
      <Taskbar />
      <Menu entries={WINDOW_MENU} className="left-[669px] top-[35px] w-[487px] pl-1.5" />
      <Menu entries={WORKSPACE_MENU} className="left-[1151px] top-[70px] w-[311px] pl-[5px]" />
    </div>
  );
}
